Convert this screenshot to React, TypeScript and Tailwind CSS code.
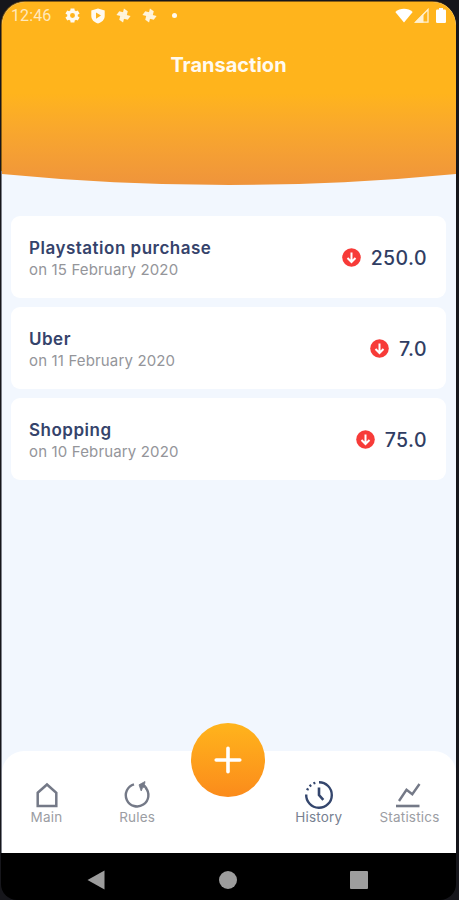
import React, { useState } from "react"

interface Transaction {
	id: number
	name: string
	date: string
	amount: string
}

const transactions: Transaction[] = [
	{ id: 1, name: "Playstation purchase", date: "15 February 2020", amount: "250.0" },
	{ id: 2, name: "Uber", date: "11 February 2020", amount: "7.0" },
	{ id: 3, name: "Shopping", date: "10 February 2020", amount: "75.0" },
]

const GearIcon = () => (
	<svg width="17" height="17" viewBox="0 0 24 24" fill="#fffaf0" className="ml-[12px]">
		<path
			fillRule="evenodd"
			d="M19.4 13a7.500 7.500 0 0 0 0-2l2.600-1.700-2.600-4.200-2.600 1a7.600 7.600 0 0 0-1.700-1L14.700 2H9.300l-.4 3.100a7.600 7.600 0 0 0-1.700 1l-2.600-1L2 9.300 4.600 11a7.500 7.500 0 0 0 0 2L2 14.700l2.600 4.200 2.600-1a7.600 7.600 0 0 0 1.700 1l.4 3.100h5.400l.4-3.100a7.600 7.600 0 0 0 1.700-1l2.600 1 2.600-4.200zM12 15.500a3.500 3.500 0 1 1 0-7 3.500 3.500 0 0 1 0 7z"
		/>
	</svg>
)

const ShieldIcon = () => (
	<svg width="14" height="16" viewBox="0 0 14 16" fill="#fffaf0" className="ml-[10px]">
		<path fillRule="evenodd" d="M7 .5 13.700 2.500V8c0 3.500-2.700 6.400-6.700 7.500C3 14.400.3 11.500.3 8V2.500zM5 4.500v6.200L10 7.600z" />
	</svg>
)

const PinwheelIcon = ({ className }: { className: string }) => (
	<svg width="15" height="15" viewBox="0 0 14 14" fill="#fff4dc" className={className}>
		<g transform="rotate(14 7 7)">
			<path d="M5.800 6.200V.5L9.900 2.200V6z" />
			<path d="M7.800 5.800H13.500L11.800 9.900H8z" />
			<path d="M8.200 7.800V13.500L4.100 11.800V8z" />
			<path d="M6.200 8.200H.5L2.200 4.100H6z" />
			<circle cx="7" cy="7" r="1.700" />
		</g>
	</svg>
)

const StatusBar = () => (
	<div className="flex h-[27px] items-center pl-[9px] pr-[10px]">
		<span className="w-[41px] whitespace-nowrap font-['Roboto',sans-serif] text-[16px] leading-none tracking-[0.1px] text-[#ffe9bd]">12:46</span>
		<GearIcon />
		<ShieldIcon />
		<PinwheelIcon className="ml-[11px]" />
		<PinwheelIcon className="ml-[11px]" />
		<span className="ml-[15px] h-[5px] w-[5px] rounded-full bg-[#fffaf0]" />
		<svg width="18" height="15" viewBox="0 0 18 15" fill="#fff" className="ml-auto">
			<path d="M9 14.500.3 4C5-.3 13-.3 17.700 4z" />
		</svg>
		<svg width="15" height="15" viewBox="0 0 15 15" className="ml-[1px]">
			<path d="M1.500 14.200 14 1.500V14.200z" fill="none" stroke="#fff1d2" strokeWidth="1.300" />
			<path d="M.5 14.800 9.500 5.500V14.800z" fill="#fff1d2" />
		</svg>
		<svg width="10" height="15" viewBox="0 0 10 15" fill="#fff" className="ml-[7px]">
			<path d="M3 0h4v1.500h1.800q1.200 0 1.200 1.200v11q0 1.300-1.200 1.300H1.200Q0 15 0 13.700v-11q0-1.200 1.200-1.200H3z" />
		</svg>
	</div>
)

const TransactionCard = ({ item }: { item: Transaction }) => (
	<li className="flex h-[82px] items-center justify-between rounded-[9px] bg-white pl-[18px] pr-[19px]">
		<div className="pt-[4px]">
			<h2 className="text-[17px] font-semibold leading-[22px] tracking-[0.5px] text-[#35436b]">{item.name}</h2>
			<p className="text-[15px] leading-[22px] tracking-[0.15px] text-[#94959a]">on {item.date}</p>
		</div>
		<div className="flex items-center gap-[10px]">
			<svg width="19" height="19" viewBox="0 0 19 19">
				<circle cx="9.500" cy="9.500" r="9.300" fill="#f73b38" />
				<path d="M9.500 4.500v9.500M5.500 10l4 4 4-4" fill="none" stroke="#fff" strokeWidth="2" />
			</svg>
			<span className="pt-[2px] text-[19.500px] font-medium leading-6 tracking-[0.45px] text-[#303d63]">{item.amount}</span>
		</div>
	</li>
)

const tabs = [
	{
		name: "Main",
		icon: <path d="M5.700 12.800 15 4.500l9.300 8.300V26H5.700z" strokeWidth="2.500" />,
	},
	{
		name: "Rules",
		icon: (
			<>
				<path d="M12 4.300A11.300 11.300 0 1 0 23.500 7.600" strokeWidth="2.400" />
				<path d="M17 4.800 23 1.500 22.500 4.500 25 7.800 20.800 7.200 19.200 11z" fill="currentColor" strokeWidth="0.800" />
			</>
		),
	},
	{
		name: "History",
		icon: (
			<>
				<path d="M15 2.200A12.800 12.800 0 1 1 2.200 14.500" strokeWidth="2.400" />
				<path d="M3.200 10.200A12.800 12.800 0 0 1 12.500 2.500" strokeWidth="2.400" strokeDasharray="2 2.600" />
				<path d="M15 7.500v7.500l4.300 4.800" strokeWidth="2.600" />
			</>
		),
	},
	{
		name: "Statistics",
		icon: (
			<>
				<path d="M5 21 12.500 9.800l5.800 4.400L25.500 4" strokeWidth="2.400" />
				<path d="M2 26h23.500" strokeWidth="2.600" />
			</>
		),
	},
]

const BottomTabs = () => {
	const [active, setActive] = useState("History")

	return (
		<nav className="relative flex h-[102px] justify-between rounded-t-[22px] bg-white pr-[2px]">
			{tabs.map((tab, index) => (
				<button
					key={tab.name}
					type="button"
					onClick={() => setActive(tab.name)}
					className={`flex w-[89px] flex-col items-center pt-[29px] ${index === 2 ? "ml-[91px]" : ""} ${active === tab.name ? "text-[#34466d]" : "text-[#747987]"}`}
				>
					<svg width="30" height="30" viewBox="0 0 30 30" fill="none" stroke="currentColor">
						{tab.icon}
					</svg>
					<span className={`-mt-px text-[13.500px] leading-[16px] tracking-[0.2px] ${active === tab.name ? "text-[#777f91]" : "text-[#9b9da3]"}`}>{tab.name}</span>
				</button>
			))}
			<button
				type="button"
				aria-label="Add"
				className="absolute left-[189px] top-[-28px] flex h-[74px] w-[74px] items-center justify-center rounded-full bg-linear-to-b from-[#ffb41c] to-[#fb8b1b]"
			>
				<svg width="28" height="28" viewBox="0 0 28 28" stroke="#fff" strokeWidth="3.600" strokeLinecap="round">
					<path d="M14 2.200v23.600M2.200 14h23.600" />
				</svg>
			</button>
		</nav>
	)
}

const App = () => {
	return (
		<div className="flex h-[900px] w-[459px] flex-col overflow-hidden bg-[#16161b] pl-[1px] pr-[3px] pt-[1px] font-['Inter',sans-serif]">
			{/* bezel highlight around the display */}
			<div className="flex h-[852px] flex-col overflow-hidden rounded-t-[24px] bg-linear-to-b from-[#8a5f14] from-20% to-[#7d8089] to-20% pl-px pt-px">
				<div className="flex grow flex-col overflow-hidden rounded-t-[23px] bg-[#f2f7fe]">
					{/* the lower edge is a shallow arc of a very large circle */}
					<header className="h-[183px] shrink-0 bg-linear-to-b from-[#ffb41c] from-50% to-[#ef943b] [clip-path:circle(2342px_at_50%_-2159px)]">
						<StatusBar />
						<h1 className="pr-px pt-[24px] text-center text-[20px] font-bold leading-6 text-[#fffaf0]">Transaction</h1>
					</header>
					<ul className="flex grow flex-col gap-[9px] pl-[9px] pr-[10px] pt-[31px]">
						{transactions.map((item) => (
							<TransactionCard key={item.id} item={item} />
						))}
					</ul>
					<BottomTabs />
				</div>
			</div>
			<div className="flex grow items-center justify-between rounded-b-[16px] bg-black pb-[1px] pl-[86px] pr-[88px] pt-[7px]">
				<svg width="18" height="20" viewBox="0 0 18 20" fill="#9d9d9d">
					<path d="M17.500.5v19L.5 10z" />
				</svg>
				<span className="h-[18px] w-[18px] rounded-full bg-[#9d9d9d]" />
				<span className="h-[18px] w-[18px] rounded-[1px] bg-[#9d9d9d]" />
			</div>
		</div>
	)
}

export default App
